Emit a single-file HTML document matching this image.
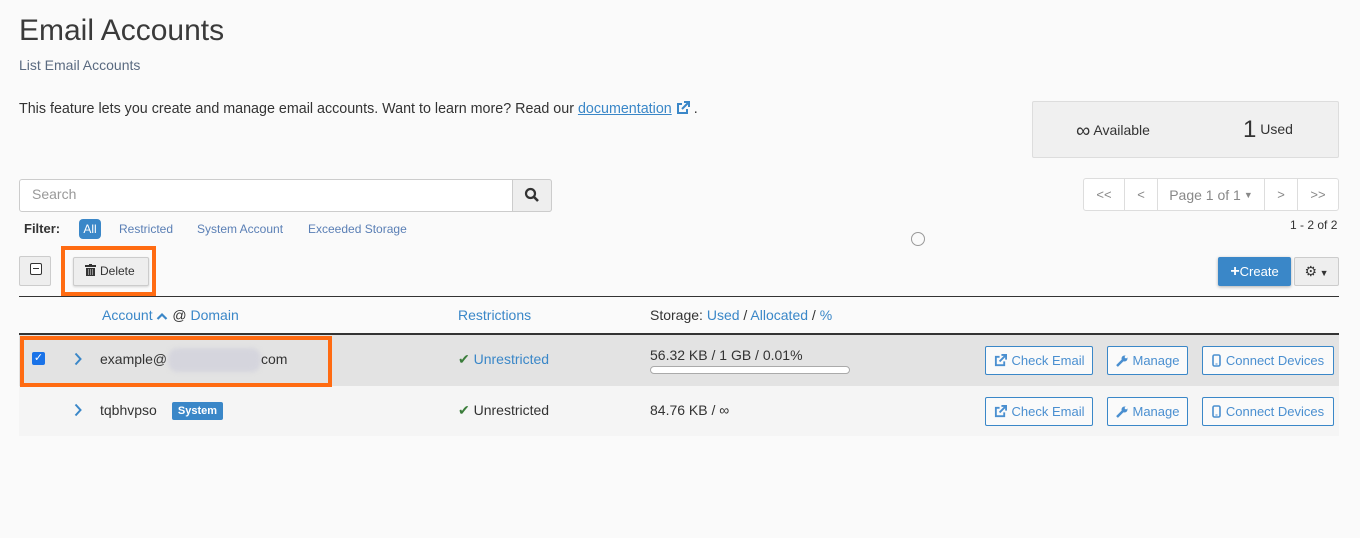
<!DOCTYPE html>
<html><head><meta charset="utf-8"><style>
*{box-sizing:border-box;margin:0;padding:0}
body{width:1360px;height:538px;background:#fafafa;font-family:"Liberation Sans",Arial,sans-serif;color:#333;position:relative;overflow:hidden;font-size:13px}
.a{position:absolute;white-space:nowrap}
.lk{color:#3a87c8}
.btn{position:absolute;border:1px solid #3a87c8;color:#4a8fd0;background:#fafafa;border-radius:2px;font-size:13px;display:flex;align-items:center;justify-content:center;gap:5px;height:29px}
.pg{position:absolute;top:178px;height:33px;border:1px solid #ddd;background:#fff;color:#888;font-size:13px;display:flex;align-items:center;justify-content:center}
.orange{position:absolute;border:4px solid #ff6b12}
</style></head><body>
<div class="a" style="left:19px;top:14px;font-size:30px;color:#3a3a3a;font-weight:300">Email Accounts</div>
<div class="a" style="left:19px;top:57px;font-size:14px;color:#5a6a80">List Email Accounts</div>
<div class="a" style="left:19px;top:101px;font-size:14.3px">This feature lets you create and manage email accounts. Want to learn more? Read our <span class="lk" style="text-decoration:underline">documentation</span> <svg width="14" height="14" viewBox="0 0 14 14" style="vertical-align:-2px"><path d="M6 3H2v9h9V8" fill="none" stroke="#3a87c8" stroke-width="2"/><path d="M8 1h5v5M13 1L6 8" fill="none" stroke="#3a87c8" stroke-width="2"/></svg> .</div>

<div class="a" style="left:1032px;top:101px;width:307px;height:57px;background:#f0f0f0;border:1px solid #ddd;border-radius:2px"></div>
<div class="a" style="left:1076px;top:120px;font-size:14px"><span style="font-size:20px;vertical-align:-2px">∞</span> Available</div>
<div class="a" style="left:1243px;top:116px;font-size:14px"><span style="font-size:24px;vertical-align:-3px">1</span> Used</div>

<div class="a" style="left:19px;top:179px;width:533px;height:33px;border:1px solid #ccc;border-radius:3px;background:#fff"></div>
<div class="a" style="left:32px;top:186px;font-size:14px;color:#999">Search</div>
<div class="a" style="left:512px;top:179px;width:40px;height:33px;background:#eee;border:1px solid #ccc;border-radius:0 3px 3px 0"></div>
<svg class="a" style="left:524px;top:187px" width="16" height="16" viewBox="0 0 16 16"><circle cx="6.5" cy="6.5" r="4.5" fill="none" stroke="#333" stroke-width="2.2"/><path d="M10 10l4 4" stroke="#333" stroke-width="2.6"/></svg>

<div class="a" style="left:24px;top:221px;font-size:13px;font-weight:bold">Filter:</div>
<div class="a" style="left:79px;top:219px;width:22px;height:20px;background:#3a87c8;border-radius:4px;color:#fff;font-size:12px;text-align:center;line-height:20px">All</div>
<div class="a lk" style="left:119px;top:222px;font-size:12px;color:#5a7fb5">Restricted</div>
<div class="a lk" style="left:197px;top:222px;font-size:12px;color:#5a7fb5">System Account</div>
<div class="a lk" style="left:308px;top:222px;font-size:12px;color:#5a7fb5">Exceeded Storage</div>
<div class="a" style="left:911px;top:232px;width:14px;height:14px;border:1px solid #999;border-radius:50%"></div>

<div class="pg" style="left:1083px;width:42px;border-radius:3px 0 0 3px">&lt;&lt;</div>
<div class="pg" style="left:1124px;width:34px">&lt;</div>
<div class="pg" style="left:1157px;width:108px;font-size:14px">Page 1 of 1 <span style="font-size:9px;margin-left:3px">▼</span></div>
<div class="pg" style="left:1264px;width:34px">&gt;</div>
<div class="pg" style="left:1297px;width:42px;border-radius:0 3px 3px 0">&gt;&gt;</div>
<div class="a" style="left:1290px;top:218px;font-size:12px;color:#333">1 - 2 of 2</div>

<div class="a" style="left:19px;top:256px;width:32px;height:30px;background:#eee;border:1px solid #ccc;border-radius:2px"></div>
<div class="a" style="left:30px;top:263px;width:12px;height:12px;border:1.5px solid #333;border-radius:2px;background:#fff"><div style="margin:3.5px 2px;height:1.5px;background:#333"></div></div>
<div class="a" style="left:73px;top:257px;width:76px;height:29px;background:#eee;border:1px solid #ccc;border-radius:2px;box-shadow:0 1px 2px rgba(0,0,0,.15);font-size:12px;line-height:27px;padding-left:11px"><svg width="11" height="12" viewBox="0 0 11 12" style="vertical-align:-1px;margin-right:4px"><rect x="0" y="1" width="11" height="2" fill="#333"/><rect x="4" y="0" width="3" height="2" fill="#333"/><path d="M1 4h9v8H1z" fill="#333"/><path d="M3.5 5v6M5.5 5v6M7.5 5v6" stroke="#aaa" stroke-width=".8"/></svg>Delete</div>
<div class="orange" style="left:61px;top:246px;width:95px;height:50px"></div>

<div class="a" style="left:1218px;top:257px;width:73px;height:29px;background:#3a87c8;border-radius:2px;color:#fff;font-size:13px;text-align:center;line-height:29px;box-shadow:0 1px 3px rgba(0,0,0,.3)"><b style="font-size:16px">+</b>Create</div>
<div class="a" style="left:1294px;top:257px;width:45px;height:29px;background:#eee;border:1px solid #ccc;border-radius:2px;text-align:center;line-height:27px;font-size:14px">⚙<span style="font-size:9px"> ▼</span></div>

<div class="a" style="left:19px;top:296px;width:1320px;height:1px;background:#333"></div>
<div class="a" style="left:102px;top:307px;font-size:14px"><span class="lk">Account</span> <svg width="12" height="8" viewBox="0 0 12 8"><path d="M1.5 7L6 2.5 10.5 7" fill="none" stroke="#3a87c8" stroke-width="2.2"/></svg> @ <span class="lk">Domain</span></div>
<div class="a lk" style="left:458px;top:307px;font-size:14px">Restrictions</div>
<div class="a" style="left:650px;top:307px;font-size:14px">Storage: <span class="lk">Used</span> / <span class="lk">Allocated</span> / <span class="lk">%</span></div>
<div class="a" style="left:19px;top:333px;width:1320px;height:2px;background:#333"></div>

<div class="a" style="left:19px;top:335px;width:1320px;height:51px;background:#e3e3e3"></div>
<div class="a" style="left:19px;top:386px;width:1320px;height:50px;background:#f5f5f5"></div>

<div class="a" style="left:32px;top:352px;width:13px;height:13px;background:#1a73e8;border-radius:2px;color:#fff;font-size:11px;line-height:13px;text-align:center">✓</div>
<svg class="a" style="left:73px;top:352px" width="10" height="14" viewBox="0 0 10 14"><path d="M2.5 1.5L7.5 7 2.5 12.5" fill="none" stroke="#3a87c8" stroke-width="2"/></svg>
<div class="a" style="left:100px;top:351px;font-size:14px">example@</div>
<div class="a" style="left:168px;top:348px;width:93px;height:24px;background:#d5d5dd;border-radius:10px;filter:blur(2px)"></div>
<div class="a" style="left:261px;top:351px;font-size:14px">com</div>
<div class="orange" style="left:20px;top:336px;width:312px;height:51px"></div>

<div class="a" style="left:458px;top:351px;font-size:14px"><span style="color:#3b7d3b">✔</span> <span class="lk">Unrestricted</span></div>
<div class="a" style="left:650px;top:347px;font-size:14px">56.32 KB / 1 GB / 0.01%</div>
<div class="a" style="left:650px;top:366px;width:200px;height:8px;background:#fff;border:1px solid #aaa;border-radius:4px"></div>

<svg class="a" style="left:73px;top:403px" width="10" height="14" viewBox="0 0 10 14"><path d="M2.5 1.5L7.5 7 2.5 12.5" fill="none" stroke="#3a87c8" stroke-width="2"/></svg>
<div class="a" style="left:100px;top:402px;font-size:14px">tqbhvpso</div>
<div class="a" style="left:172px;top:402px;width:51px;height:18px;background:#3a87c8;border-radius:2px;color:#fff;font-size:11px;font-weight:bold;text-align:center;line-height:18px">System</div>
<div class="a" style="left:458px;top:402px;font-size:14px"><span style="color:#3b7d3b">✔</span> Unrestricted</div>
<div class="a" style="left:650px;top:402px;font-size:14px">84.76 KB / ∞</div>

<div class="btn" style="left:985px;top:346px;width:108px"><svg width="13" height="13" viewBox="0 0 14 14"><path d="M6 3H2v9h9V8" fill="none" stroke="#4a8fd0" stroke-width="2"/><path d="M8 1h5v5M13 1L6 8" fill="none" stroke="#4a8fd0" stroke-width="2"/></svg>Check Email</div>
<div class="btn" style="left:1107px;top:346px;width:81px"><svg width="12" height="12" viewBox="0 0 12 12"><path d="M1 11L7 5" stroke="#4a8fd0" stroke-width="2.5"/><circle cx="8.5" cy="3.5" r="3" fill="#4a8fd0"/><circle cx="10" cy="2" r="1.3" fill="#fafafa"/></svg>Manage</div>
<div class="btn" style="left:1202px;top:346px;width:132px"><svg width="9" height="13" viewBox="0 0 9 13"><rect x="1" y="1" width="7" height="11" rx="1.5" fill="none" stroke="#4a8fd0" stroke-width="1.6"/><rect x="3.5" y="9.5" width="2" height="1" fill="#4a8fd0"/></svg>Connect Devices</div>
<div class="btn" style="left:985px;top:397px;width:108px"><svg width="13" height="13" viewBox="0 0 14 14"><path d="M6 3H2v9h9V8" fill="none" stroke="#4a8fd0" stroke-width="2"/><path d="M8 1h5v5M13 1L6 8" fill="none" stroke="#4a8fd0" stroke-width="2"/></svg>Check Email</div>
<div class="btn" style="left:1107px;top:397px;width:81px"><svg width="12" height="12" viewBox="0 0 12 12"><path d="M1 11L7 5" stroke="#4a8fd0" stroke-width="2.5"/><circle cx="8.5" cy="3.5" r="3" fill="#4a8fd0"/><circle cx="10" cy="2" r="1.3" fill="#fafafa"/></svg>Manage</div>
<div class="btn" style="left:1202px;top:397px;width:132px"><svg width="9" height="13" viewBox="0 0 9 13"><rect x="1" y="1" width="7" height="11" rx="1.5" fill="none" stroke="#4a8fd0" stroke-width="1.6"/><rect x="3.5" y="9.5" width="2" height="1" fill="#4a8fd0"/></svg>Connect Devices</div>
</body></html>
